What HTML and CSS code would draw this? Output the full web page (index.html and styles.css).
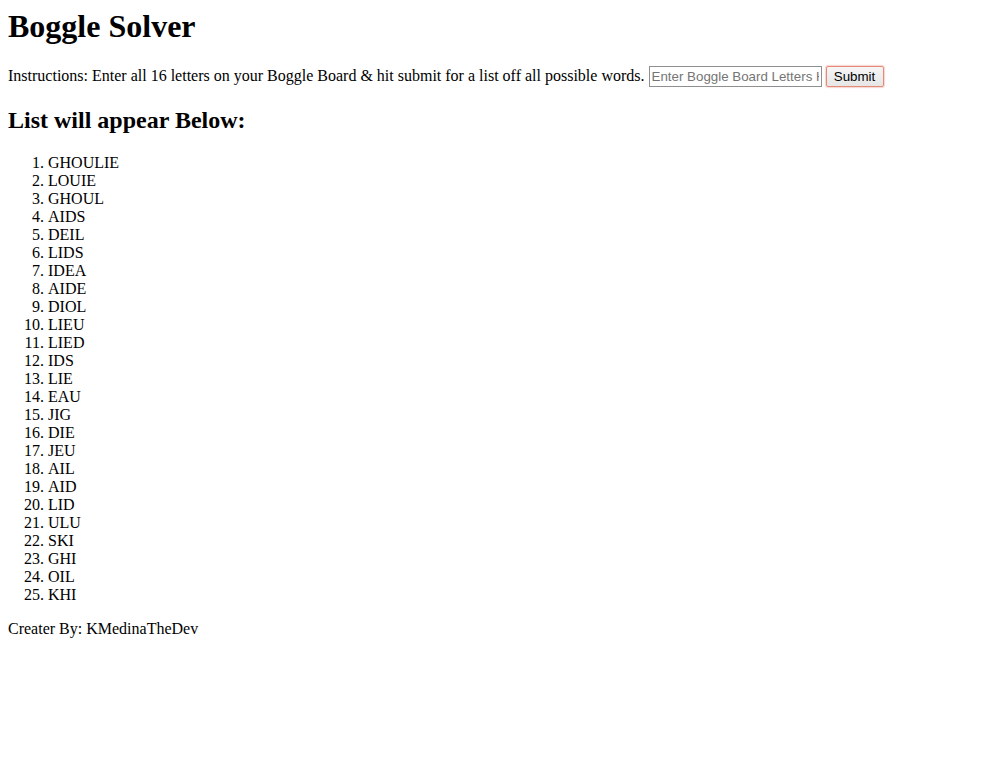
FILE: index.html
```html
<!DOCTYPE html>
<html>
<head>
<meta charset="utf-8">
<title>Boggle Solver</title>
<link rel="stylesheet" href="styles.css">
</head>
<body class="page">
<h1 class="title">Boggle Solver</h1>
<form class="entry">Instructions: Enter all 16 letters on your Boggle Board &amp; hit submit for a list off all possible words. <input class="letters" type="text" placeholder="Enter Boggle Board Letters Here"> <button class="submit" type="button">Submit</button></form>
<h2 class="subtitle">List will appear Below:</h2>
<ol class="words">
<li>GHOULIE</li>
<li>LOUIE</li>
<li>GHOUL</li>
<li>AIDS</li>
<li>DEIL</li>
<li>LIDS</li>
<li>IDEA</li>
<li>AIDE</li>
<li>DIOL</li>
<li>LIEU</li>
<li>LIED</li>
<li>IDS</li>
<li>LIE</li>
<li>EAU</li>
<li>JIG</li>
<li>DIE</li>
<li>JEU</li>
<li>AIL</li>
<li>AID</li>
<li>LID</li>
<li>ULU</li>
<li>SKI</li>
<li>GHI</li>
<li>OIL</li>
<li>KHI</li>
</ol>
<p class="credit">Creater By: KMedinaTheDev</p>
</body>
</html>
```
FILE: styles.css
```css
.page {
  margin: 8px;
  font-family: "Liberation Serif", serif;
  font-size: 16px;
  color: #000;
  background: #fff;
}
.title {
  margin: 0 0 21.44px;
  font-size: 32px;
  font-weight: bold;
}
.entry {
  margin: 0;
}
.letters {
  font-family: "Liberation Sans", Arial, sans-serif;
  font-size: 13.33px;
  width: 173px;
  padding: 1px 2px;
  border: 1px solid #8f8f8f;
  box-sizing: border-box;
  height: 21px;
}
.letters::placeholder {
  color: #757575;
}
.submit {
  font-family: "Liberation Sans", Arial, sans-serif;
  font-size: 13.33px;
  width: 58px;
  height: 21px;
  padding: 1px 4px;
  background: linear-gradient(#f6f6f6, #e6e6e6);
  border: 1px solid #e58a78;
  box-shadow: 0 0 1px 1px rgba(229, 138, 120, 0.35);
  border-radius: 2px;
  color: #000;
}
.subtitle {
  margin: 19.92px 0;
  font-size: 24px;
}
.words {
  margin: 16px 0;
  padding-left: 40px;
}
.credit {
  margin: 16px 0;
}
```
